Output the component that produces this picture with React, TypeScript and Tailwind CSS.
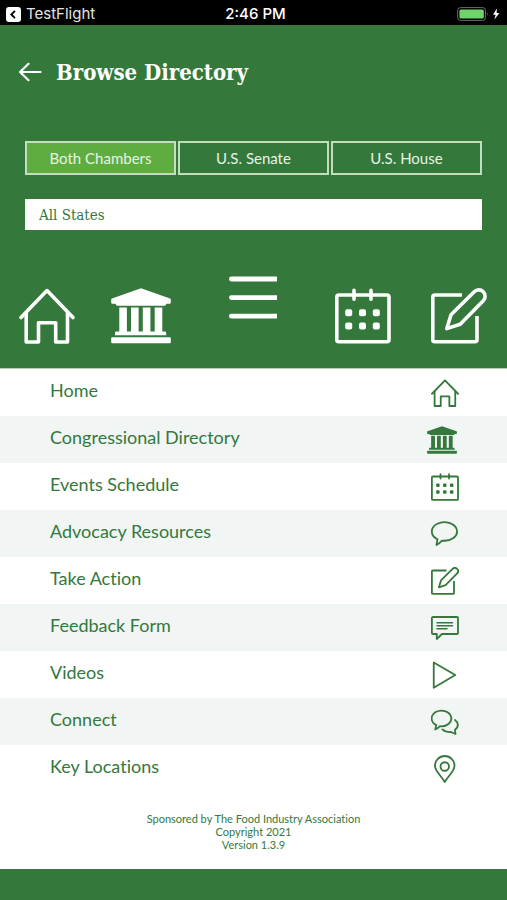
import type { ReactNode } from "react";
import clsx from "clsx";

type IconProps = { className?: string };

function StrokeIcon({ className, children }: IconProps & { children: ReactNode }) {
    return (
        <svg
            viewBox="0 0 56 56"
            fill="none"
            stroke="currentColor"
            strokeWidth="3.6"
            strokeLinecap="round"
            strokeLinejoin="round"
            className={className}
            aria-hidden="true"
        >
            {children}
        </svg>
    );
}

function HomeIcon({ className }: IconProps) {
    return (
        <StrokeIcon className={className}>
            <path d="M2 29.5 28 2.6l26 26.9" />
            <path d="M7.2 25v29h12.3V34.7h17.2V54h11.8V25" />
        </StrokeIcon>
    );
}

function CapitolIcon({ className }: IconProps) {
    return (
        <svg viewBox="0 0 60 56" fill="currentColor" className={className} aria-hidden="true">
            <path d="M30 .3 59 10.4q.8.4.8 1.2v3q0 1.2-1.2 1.2h-3.2q-.4 2-2 2H6.6q-1.6 0-2-2H1.4q-1.2 0-1.2-1.2v-3q0-.8.8-1.2z" />
            <path d="M8.3 19.5h7.6v24H20v-24h7.6v24h4.2v-24h7.6v24h4.3v-24h7.6v24h2.5q1.4 0 1.4 1.4v2.4H4v-2.4q0-1.4 1.4-1.4h2.9z" />
            <rect x=".2" y="49.3" width="59.6" height="6" rx="1.2" />
        </svg>
    );
}

function MenuIcon({ className }: IconProps) {
    return (
        <svg viewBox="0 0 48 44" fill="currentColor" className={className} aria-hidden="true">
            <path d="M2.4.6H48v4.8H2.4a2.4 2.4 0 0 1 0-4.8zM2.4 19.2H48V24H2.4a2.4 2.4 0 0 1 0-4.8zM2.4 37.8H48v4.8H2.4a2.4 2.4 0 0 1 0-4.8z" />
        </svg>
    );
}

function CalendarIcon({ className }: IconProps) {
    return (
        <StrokeIcon className={className}>
            <rect x="1.8" y="7" width="52.2" height="46.8" rx="2" />
            <path d="M19 2.4v8.8M36 2.4v8.8" />
            <g fill="currentColor" stroke="none">
                <rect x="10.2" y="21.2" width="7" height="7" rx="2" />
                <rect x="24" y="21.2" width="7" height="7" rx="2" />
                <rect x="37.8" y="21.2" width="7" height="7" rx="2" />
                <rect x="10.2" y="34.6" width="7" height="7" rx="2" />
                <rect x="24" y="34.6" width="7" height="7" rx="2" />
                <rect x="37.8" y="34.6" width="7" height="7" rx="2" />
            </g>
        </StrokeIcon>
    );
}

function EditIcon({ className }: IconProps) {
    return (
        <StrokeIcon className={className}>
            <path strokeLinecap="butt" d="M31 7H3.8a2 2 0 0 0-2 2v42.8a2 2 0 0 0 2 2h40.2a2 2 0 0 0 2-2V28" />
            <path d="M15.8 40.6 20 26.8 43.2 3.8a6.3 6.3 0 0 1 9.1 8.9L29.2 36.2z" />
        </StrokeIcon>
    );
}

function SpeechIcon({ className }: IconProps) {
    return (
        <StrokeIcon className={className}>
            <path d="M22 41.1A25.2 18.5 0 1 0 13 38.4L11 50c4-1.5 7-4.5 11-8.9z" />
        </StrokeIcon>
    );
}

function FeedbackIcon({ className }: IconProps) {
    return (
        <StrokeIcon className={className}>
            <path d="M3.8 6H52a2 2 0 0 1 2 2v30a2 2 0 0 1-2 2H22L11.5 50V40H3.8a2 2 0 0 1-2-2V8a2 2 0 0 1 2-2z" />
            <path strokeWidth="3" d="M12 17.5h31M12 23.5h31M12 29.5h20" />
        </StrokeIcon>
    );
}

function PlayIcon({ className }: IconProps) {
    return (
        <StrokeIcon className={className}>
            <path d="M5.5 3 48.5 28l-43 25.5z" />
        </StrokeIcon>
    );
}

function ConnectIcon({ className }: IconProps) {
    return (
        <StrokeIcon className={className}>
            <path d="M18 36.4A19.7 15.7 0 1 0 10.5 34.2L8.5 43c4-1 6-3 9.5-6.6z" />
            <path d="M48 24c7 5 8 14 0 19.5l1 8.5-9-4c-7 1-13-1-17-5" />
        </StrokeIcon>
    );
}

function PinIcon({ className }: IconProps) {
    return (
        <StrokeIcon className={className}>
            <path d="M27.5 54C21 42 8 33 8 21.500a19.5 19.5 0 0 1 39 0C47 33 34 42 27.5 54z" />
            <circle cx="27.5" cy="23" r="8.5" />
        </StrokeIcon>
    );
}

const chambers = ["Both Chambers", "U.S. Senate", "U.S. House"];

const menuItems = [
    { label: "Home", icon: HomeIcon },
    { label: "Congressional Directory", icon: CapitolIcon, wide: true },
    { label: "Events Schedule", icon: CalendarIcon },
    { label: "Advocacy Resources", icon: SpeechIcon },
    { label: "Take Action", icon: EditIcon },
    { label: "Feedback Form", icon: FeedbackIcon },
    { label: "Videos", icon: PlayIcon },
    { label: "Connect", icon: ConnectIcon },
    { label: "Key Locations", icon: PinIcon },
];

function StatusBar() {
    return (
        <div className="grid grid-cols-3 items-center h-[25px] bg-black px-1.5 pt-[3px] font-['Inter',sans-serif] text-[15px] leading-5 text-white">
            <div className="flex items-center gap-[5px]">
                <svg viewBox="0 0 15 15" className="w-[15px] h-[15px]" aria-hidden="true">
                    <rect width="15" height="15" rx="3" fill="#fff" />
                    <path d="M9 3.8 5.3 7.5 9 11.2" fill="none" stroke="#000" strokeWidth="1.9" />
                </svg>
                <span className="text-[#e4e4e4]">TestFlight</span>
            </div>
            <span className="text-center font-medium pl-1">2:46 PM</span>
            <svg viewBox="0 0 44 14" className="w-[44px] h-[14px] justify-self-end" aria-hidden="true">
                <rect x=".6" y=".6" width="28" height="12.8" rx="3" fill="none" stroke="#6b6b6b" />
                <rect x="2.4" y="2.4" width="24.4" height="9.2" rx="1.5" fill="#6fd36b" />
                <path d="M30.3 5q1.5 2 0 4z" fill="#6b6b6b" />
                <path d="M39.8 1.5 36 7.8h2.6l-1.2 4.7 5-6.6h-2.7z" fill="#fff" />
            </svg>
        </div>
    );
}

function Header() {
    return (
        <header className="bg-[#34783c] pt-[31px] pb-6 text-white">
            <div className="flex items-center gap-3.5 h-8 px-[18px]">
                <button type="button" aria-label="Back">
                    <svg
                        viewBox="0 0 24 20"
                        fill="none"
                        stroke="currentColor"
                        strokeWidth="2.2"
                        strokeLinecap="round"
                        strokeLinejoin="round"
                        className="w-6 h-5"
                    >
                        <path d="M22.5 10H2M10.5 1.8 2 10l8.5 8.2" />
                    </svg>
                </button>
                <h1 className="font-['Roboto_Slab','DejaVu_Serif_Condensed','DejaVu_Serif',serif] text-[22px] leading-8 font-bold whitespace-nowrap">
                    Browse Directory
                </h1>
            </div>

            <div className="px-[25px] mt-[53px]">
                <div className="grid grid-cols-3 gap-0.5">
                    {chambers.map((name, idx) => (
                        <button
                            type="button"
                            key={name}
                            className={clsx(
                                "h-[34px] border-2 border-[#c1dfbd] text-[15px] leading-5 text-[#e6f4e4]",
                                idx === 0 && "bg-[#5fac41]"
                            )}
                        >
                            {name}
                        </button>
                    ))}
                </div>
                <select
                    aria-label="State"
                    className="block w-full h-[31px] mt-6 px-3.5 appearance-none bg-white font-['Roboto_Slab','DejaVu_Serif_Condensed','DejaVu_Serif',serif] text-[15px] leading-5 text-[#34783c]"
                >
                    <option>All States</option>
                </select>
            </div>

            <nav className="flex items-start justify-between mt-[46px] pl-[19px] pr-5" aria-label="Shortcuts">
                <div className="flex gap-9 pt-3">
                    <a href="#home" aria-label="Home">
                        <HomeIcon className="w-14 h-14" />
                    </a>
                    <a href="#directory" aria-label="Congressional Directory">
                        <CapitolIcon className="w-[60px] h-14" />
                    </a>
                </div>
                <button type="button" aria-label="Menu">
                    <MenuIcon className="w-12 h-11" />
                </button>
                <div className="flex gap-10 pt-3">
                    <a href="#events" aria-label="Events Schedule">
                        <CalendarIcon className="w-14 h-14" />
                    </a>
                    <a href="#action" aria-label="Take Action">
                        <EditIcon className="w-14 h-14" />
                    </a>
                </div>
            </nav>
        </header>
    );
}

export default function App() {
    return (
        <div className="flex flex-col min-h-screen bg-white font-['Lato',sans-serif] [font-variant-ligatures:no-common-ligatures] text-[#34783c]">
            <StatusBar />
            <Header />

            <main className="flex-1 border-t border-[#b5d0b6]">
                <ul>
                    {menuItems.map((item) => {
                        const Icon = item.icon;
                        return (
                            <li key={item.label} className="even:bg-[#f1f5f4]">
                                <a href="#menu" className="flex items-center justify-between h-[47px] pl-[50px] pr-12">
                                    <span className="text-lg leading-6 pb-1.5">{item.label}</span>
                                    <span className="flex w-8">
                                        <Icon className={item.wide ? "w-[30px] h-7" : "w-7 h-7 ml-auto"} />
                                    </span>
                                </a>
                            </li>
                        );
                    })}
                </ul>

                <div className="pt-5 pb-[18px] text-center text-[11px] leading-[13px]">
                    <p>Sponsored by The Food Industry Association</p>
                    <p>Copyright 2021</p>
                    <p>Version 1.3.9</p>
                </div>
            </main>

            <footer className="h-[31px] bg-[#34783c]" />
        </div>
    );
}
